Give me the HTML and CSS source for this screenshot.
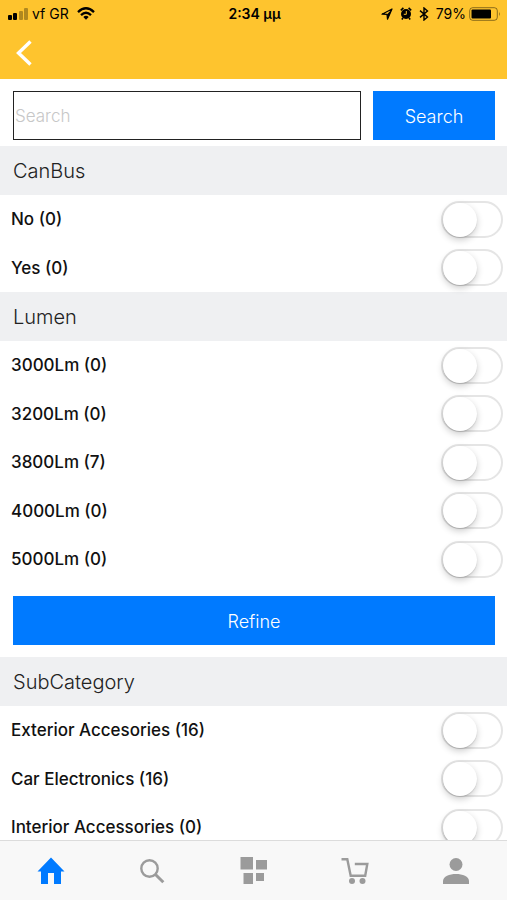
FILE: index.html
```html
<!DOCTYPE html>
<html lang="en">
<head>
<meta charset="utf-8">
<meta name="viewport" content="width=device-width, initial-scale=1">
<title>Filters</title>
<link rel="stylesheet" href="styles.css">
</head>
<body>
<header class="header">
  <div class="status">
    <div class="status-side">
      <svg width="21" height="12" viewBox="0 0 21 12" aria-hidden="true"><rect x="0" y="7" width="4" height="5" rx="1"/><rect x="5" y="5" width="4" height="7" rx="1"/><g opacity=".3"><rect x="11" y="3" width="4" height="9" rx="1"/><rect x="16" y="0" width="4" height="12" rx="1"/></g></svg>
      <span class="carrier">vf GR</span>
      <svg class="wifi" width="18" height="13" viewBox="0 0 18 13" aria-hidden="true"><g fill="none" stroke="#000" stroke-width="2.3"><path d="M1 5.1Q9-2.5 17 5.1"/><path d="M4 8.2Q9 3.4 14 8.2"/></g><path d="M6.3 10Q9 7.7 11.7 10L9 12.8Z"/></svg>
    </div>
    <div class="time">2:34 μμ</div>
    <div class="status-side status-right">
      <svg width="12" height="12" viewBox="0 0 12 12" aria-hidden="true"><path d="M1 6.200 11 1 6.500 11.200 6 6.400Z" fill="none" stroke="#000" stroke-width="1.200" stroke-linejoin="round"/><path d="M6 6.400 11 1 6.500 11.200Z"/></svg>
      <svg width="12" height="13" viewBox="0 0 12 13" aria-hidden="true"><circle cx="6" cy="7" r="5"/><path d="M.8 3.4 3.4.9M8.6.9l2.6 2.5M3 11l-1.2 1.500M9 11l1.2 1.500" stroke="#000" stroke-width="1.6"/><path d="M6.300 4v3.300H3.800" fill="none" stroke="#fec42e" stroke-width="1"/></svg>
      <svg width="10" height="14" viewBox="0 0 10 14" aria-hidden="true"><path d="M1 3.6 8.5 10 5 13V1l3.5 3L1 10.4" fill="none" stroke="#000" stroke-width="1.4"/></svg>
      <span class="percent">79%</span>
      <svg width="32" height="14" viewBox="0 0 32 14" aria-hidden="true"><rect x=".7" y=".7" width="27.6" height="12.6" rx="3" fill="none" stroke="#000" stroke-opacity=".45" stroke-width="1"/><rect x="2.5" y="2.5" width="19.5" height="9" rx="1"/><path d="M30 4.8q1.6 2.2 0 4.4Z" opacity=".5"/></svg>
    </div>
  </div>
  <a class="back" href="#" aria-label="Back"><svg width="17" height="28" viewBox="0 0 17 28" aria-hidden="true"><path d="M14.5 2.5 2.5 14l12 11.5" fill="none" stroke="#fff" stroke-width="3.4"/></svg></a>
</header>

<main class="content">
  <form class="search">
    <input class="search-box" type="text" placeholder="Search" aria-label="Search">
    <button class="button" type="button">Search</button>
  </form>

  <h2 class="heading">CanBus</h2>
  <ul class="options">
    <li><label for="no">No (0)</label><input class="switch" id="no" type="checkbox"></li>
    <li><label for="yes">Yes (0)</label><input class="switch" id="yes" type="checkbox"></li>
  </ul>

  <h2 class="heading">Lumen</h2>
  <ul class="options">
    <li><label for="lm3000">3000Lm (0)</label><input class="switch" id="lm3000" type="checkbox"></li>
    <li><label for="lm3200">3200Lm (0)</label><input class="switch" id="lm3200" type="checkbox"></li>
    <li><label for="lm3800">3800Lm (7)</label><input class="switch" id="lm3800" type="checkbox"></li>
    <li><label for="lm4000">4000Lm (0)</label><input class="switch" id="lm4000" type="checkbox"></li>
    <li><label for="lm5000">5000Lm (0)</label><input class="switch" id="lm5000" type="checkbox"></li>
  </ul>

  <div class="refine"><button class="button" type="button">Refine</button></div>

  <h2 class="heading">SubCategory</h2>
  <ul class="options">
    <li><label for="exterior">Exterior Accesories (16)</label><input class="switch" id="exterior" type="checkbox"></li>
    <li><label for="electronics">Car Electronics (16)</label><input class="switch" id="electronics" type="checkbox"></li>
    <li><label for="interior">Interior Accessories (0)</label><input class="switch" id="interior" type="checkbox"></li>
  </ul>
</main>

<nav class="tabs">
  <a class="active" href="#" aria-label="Home"><svg width="28" height="28" viewBox="0 0 28 28" aria-hidden="true"><path d="M14 .5 27.5 14.5H24V27h-7V16h-6v11H4V14.5H.5Z"/></svg></a>
  <a href="#" aria-label="Search"><svg width="28" height="28" viewBox="0 0 28 28" aria-hidden="true"><g fill="none" stroke="currentColor"><circle cx="11.5" cy="11.5" r="8.2" stroke-width="2.4"/><path d="m17 17 8.300 8.300" stroke-width="3"/></g></svg></a>
  <a href="#" aria-label="Categories"><svg width="28" height="28" viewBox="0 0 28 28" aria-hidden="true"><path d="M.5 0H13v12.5H.5ZM16 3h11v9.500H16ZM3.500 16H13v11H3.500ZM16 16h8v8h-8Z"/></svg></a>
  <a href="#" aria-label="Cart"><svg width="28" height="28" viewBox="0 0 28 28" aria-hidden="true"><path d="M.5 2.200h5.800l3.400 16.500h14.500L26.300 7H13.800" fill="none" stroke="currentColor" stroke-width="2.400"/><circle cx="11" cy="24" r="3"/><circle cx="21.500" cy="24" r="3"/></svg></a>
  <a href="#" aria-label="Profile"><svg width="28" height="28" viewBox="0 0 28 28" aria-hidden="true"><circle cx="14" cy="7.500" r="6.500"/><path d="M1 27v-3C1 14.500 27 14.500 27 24v3Z"/></svg></a>
</nav>
</body>
</html>
```
FILE: styles.css
```css
* {
  box-sizing: border-box;
}

body {
  margin: 0;
  height: 100vh;
  display: flex;
  flex-direction: column;
  background: #fff;
  color: #111;
  font-family: Inter, "Liberation Sans", sans-serif;
}

svg {
  display: block;
  fill: currentColor;
  flex: none;
}

.header {
  flex: none;
  height: 79px;
  background: #fec42e;
}

.status {
  display: grid;
  grid-template-columns: 1fr auto 1fr;
  align-items: center;
  height: 27px;
  padding: 0 6px 0 8px;
  color: #000;
  font-size: 14px;
}

.status-side {
  display: flex;
  align-items: center;
  gap: 3px;
}

.status-right {
  justify-content: flex-end;
  gap: 7px;
}

.percent {
  margin-right: -4px;
}

.wifi {
  margin-left: 5px;
}

.time {
  font-weight: 600;
}

.back {
  display: inline-block;
  padding: 12px 16px;
}

.content {
  flex: 1;
  min-height: 0;
  overflow-y: auto;
  scrollbar-width: none;
}

.search {
  display: flex;
  gap: 12px;
  padding: 12px 12px 6px 13px;
}

.search-box {
  flex: 1;
  min-width: 0;
  height: 49px;
  padding: 0 1px;
  border: 1px solid #222;
  border-radius: 0;
  outline: 0;
  background: #fff;
  font: 300 17px Inter, sans-serif;
}

.search-box::placeholder {
  color: #c7c7c7;
}

.button {
  width: 122px;
  height: 49px;
  padding: 2px 0 0;
  border: 0;
  background: #007aff;
  color: #fff;
  font: 300 18px Inter, sans-serif;
}

.heading {
  margin: 0;
  padding: 1px 13px 0;
  background: #eff0f2;
  color: #222;
  font-size: 20px;
  font-weight: 300;
  line-height: 48px;
}

.options {
  margin: 0;
  padding: 0;
  list-style: none;
}

.options li {
  display: flex;
  align-items: center;
  justify-content: space-between;
  height: 48px;
  padding: 0 4px 0 11px;
  font-size: 17px;
  font-weight: 500;
}

.options li:nth-child(even) {
  height: 49px;
}

.switch {
  appearance: none;
  width: 62px;
  height: 37px;
  margin: 0;
  border: 2px solid #e5e5e5;
  border-radius: 19px;
  background: #fff;
}

.switch::before {
  content: "";
  display: block;
  width: 34px;
  height: 34px;
  border-radius: 50%;
  background: #fff;
  box-shadow: 0 3px 7px rgba(0, 0, 0, 0.2), 0 1px 1px rgba(0, 0, 0, 0.12);
}

.switch:checked {
  border-color: #4cd964;
  background: #4cd964;
}

.switch:checked::before {
  margin-left: auto;
}

.refine {
  padding: 13px 12px 12px 13px;
}

.refine .button {
  display: block;
  width: 100%;
}

.tabs {
  flex: none;
  display: flex;
  height: 60px;
  border-top: 1px solid #dcdcdc;
  background: #f8f8f8;
}

.tabs a {
  flex: 1;
  display: flex;
  align-items: center;
  justify-content: center;
  color: #9b9b9b;
}

.tabs .active {
  color: #007aff;
}
```
